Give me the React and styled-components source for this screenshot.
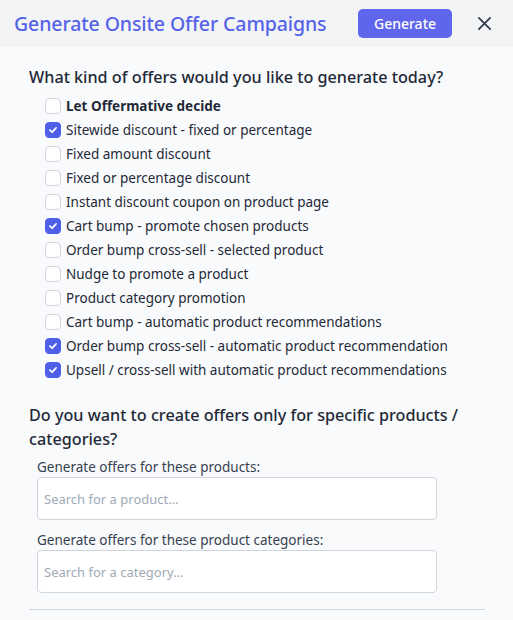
import React from 'react'
import styled, { createGlobalStyle } from 'styled-components'

const GlobalStyle = createGlobalStyle`
  body {
    margin: 0;
    background: #f9fafb;
    font-family: 'Noto Sans', 'Open Sans', sans-serif;
  }
`

const offers = [
  { label: 'Let Offermative decide', bold: true },
  { label: 'Sitewide discount - fixed or percentage', checked: true },
  { label: 'Fixed amount discount' },
  { label: 'Fixed or percentage discount' },
  { label: 'Instant discount coupon on product page' },
  { label: 'Cart bump - promote chosen products', checked: true },
  { label: 'Order bump cross-sell - selected product' },
  { label: 'Nudge to promote a product' },
  { label: 'Product category promotion' },
  { label: 'Cart bump - automatic product recommendations' },
  { label: 'Order bump cross-sell - automatic product recommendation', checked: true },
  { label: 'Upsell / cross-sell with automatic product recommendations', checked: true },
]

function App() {
  return (
    <>
      <GlobalStyle />
      <Panel>
        <Header>
          <Title>Generate Onsite Offer Campaigns</Title>
          <GenerateButton>Generate</GenerateButton>
          <CloseButton aria-label="close">
            <svg width="15" height="15" viewBox="0 0 16 16" fill="none" stroke="#374151" strokeWidth="2" strokeLinecap="round">
              <path d="M2 2L14 14M14 2L2 14" />
            </svg>
          </CloseButton>
        </Header>

        <Body>
          <Question>What kind of offers would you like to generate today?</Question>
          <OptionList>
            {offers.map((o) => (
              <Option key={o.label}>
                <Box checked={o.checked}>
                  {o.checked && (
                    <svg width="10" height="10" viewBox="0 0 10 10" fill="none" stroke="#fff" strokeWidth="1.8" strokeLinecap="round" strokeLinejoin="round">
                      <path d="M2 5.2L4.2 7.2L8 3" />
                    </svg>
                  )}
                </Box>
                <OptionText bold={o.bold}>{o.label}</OptionText>
              </Option>
            ))}
          </OptionList>

          <Question>Do you want to create offers only for specific products / categories?</Question>
          <Fields>
            <Field>
              <FieldLabel>Generate offers for these products:</FieldLabel>
              <SearchInput placeholder="Search for a product…" />
            </Field>
            <Field>
              <FieldLabel>Generate offers for these product categories:</FieldLabel>
              <SearchInput placeholder="Search for a category…" />
            </Field>
          </Fields>
          <Divider />
        </Body>
      </Panel>
    </>
  )
}

export default App

const Panel = styled.div`
  width: 513px;
  min-height: 620px;
  background: #f9fafb;
`

const Header = styled.div`
  height: 47px;
  background: #f3f4f6;
  display: flex;
  align-items: center;
  padding: 0 21px 0 14px;
  box-sizing: border-box;
`

const Title = styled.h1`
  flex: 1;
  margin: 0;
  font-size: 19.5px;
  font-weight: 500;
  color: #5563e8;
  letter-spacing: -0.1px;
`

const GenerateButton = styled.button`
  width: 94px;
  height: 29px;
  border: none;
  border-radius: 5px;
  background: #5f66ec;
  color: #fff;
  font-family: inherit;
  font-size: 14px;
  font-weight: 500;
  margin-right: 25px;
  cursor: pointer;
`

const CloseButton = styled.button`
  background: none;
  border: none;
  padding: 0;
  width: 15px;
  height: 15px;
  display: flex;
  cursor: pointer;
`

const Body = styled.div`
  padding: 18px 28px 0 29px;
`

const Question = styled.h2`
  margin: 0;
  font-size: 16.2px;
  font-weight: 500;
  line-height: 24px;
  color: #1f2937;
`

const OptionList = styled.div`
  display: flex;
  flex-direction: column;
  padding: 5px 0 0 16px;
  margin-bottom: 21px;
`

const Option = styled.label`
  display: flex;
  align-items: center;
  gap: 5px;
  height: 24px;
`

const Box = styled.span`
  width: 16px;
  height: 16px;
  box-sizing: border-box;
  border-radius: 4px;
  border: 1px solid ${(p) => (p.checked ? '#4f5fe8' : '#d1d5db')};
  background: ${(p) => (p.checked ? '#4f5fe8' : '#fff')};
  display: flex;
  align-items: center;
  justify-content: center;
  flex-shrink: 0;
`

const OptionText = styled.span`
  font-size: 13.5px;
  color: #1f2937;
  font-weight: ${(p) => (p.bold ? 700 : 400)};
`

const Fields = styled.div`
  padding: 6px 0 0 8px;
  display: flex;
  flex-direction: column;
  gap: 10px;
`

const Field = styled.div`
  display: flex;
  flex-direction: column;
  gap: 0;
`

const FieldLabel = styled.span`
  font-size: 13.5px;
  color: #374151;
  line-height: 20px;
`

const SearchInput = styled.input`
  width: 400px;
  height: 43px;
  box-sizing: border-box;
  border: 1px solid #d1d5db;
  border-radius: 4px;
  background: #fff;
  padding: 0 6px;
  font-family: inherit;
  font-size: 13px;

  &::placeholder {
    color: #a0aab8;
  }
`

const Divider = styled.hr`
  margin: 16px 0 0 0;
  border: none;
  border-top: 1px solid #d1d5db;
`
